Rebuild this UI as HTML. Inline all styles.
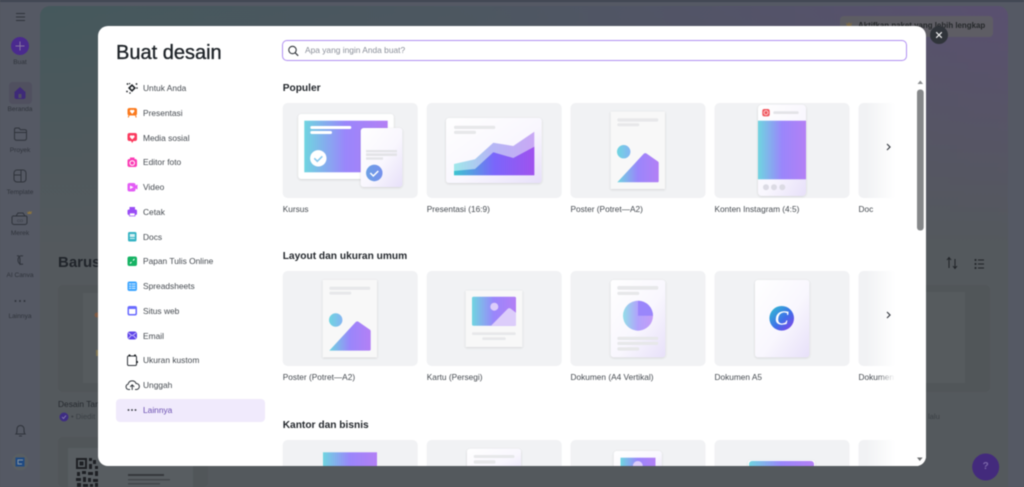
<!DOCTYPE html>
<html><head><meta charset="utf-8"><title>Buat desain</title>
<style>
html,body{margin:0;padding:0;width:1024px;height:487px;overflow:hidden;background:#53585c}
#w{position:absolute;left:0;top:0;width:1024px;height:487px;overflow:hidden;filter:blur(.4px);font-family:"Liberation Sans",sans-serif}
.a{position:absolute}
.t{position:absolute;white-space:nowrap;line-height:12px;height:12px;margin-top:-6px}
.s{font-size:6.6px;color:#2f333b;width:40px;left:0;text-align:center}
.n{font-size:8.4px;color:#454a50;left:143px}
.h{font-size:10.2px;font-weight:bold;color:#24282d;left:282.700px;margin-top:-4.500px}
.l{font-size:8.300px;color:#454a50}
</style></head><body><div id="w">
<div class="a" style="left:0;top:0;width:1024px;height:487px;background:#555964"></div>
<div class="a" style="left:0;top:0;width:1024px;height:2px;background:#3f4552"></div>
<div class="a" style="left:40px;top:6px;width:968px;height:481px;border-radius:10px 10px 0 0;background:linear-gradient(180deg,rgba(84,89,93,0) 0,rgba(84,89,93,.4) 90px,#54595d 240px),linear-gradient(90deg,#45585c 0,#4d5761 45%,#5a5070 100%)"></div>
<div class="a" style="left:9px;top:82px;width:23px;height:22px;border-radius:4px;background:#50505f"></div>

<svg class="a" style="left:0;top:0" width="1024" height="487" viewBox="0 0 1024 487">
<!-- left rail icons -->
<g fill="none" stroke="#2f333b" stroke-width="1">
<path d="M16 13.500h9M16 17h9M16 20.500h9"/>
<path d="M14.500 129.500a1.500 1.500 0 0 1 1.500-1.500h3l1.500 1.800h4.500a1.500 1.500 0 0 1 1.500 1.500v7a2 2 0 0 1-2 2h-8a2 2 0 0 1-2-2z"/><path d="M14.500 132.500h11.500"/>
<rect x="14" y="170" width="12" height="12" rx="3"/><path d="M14 175h7M21 170v12"/>
<path d="M14 216h12a1.500 1.500 0 0 1 1 1.500v5a2 2 0 0 1-2 2h-11a2 2 0 0 1-2-2v-5a1.500 1.500 0 0 1 2-1.500zM16 216l2-3h5l2 3"/>
<path d="M23 256c-3-1-5 1-5 4s2 5 5 4M17 256c2-1 3 1 3 4v5"/>
<path d="M16 434c1-1 1-2 1-5a3.500 3.500 0 0 1 7 0c0 3 0 4 1 5zM19 436h3"/>
<path d="M949 268v-9.500M947 260l2-2.500 2 2.500M955 259v9.500M953 266l2 2.500 2-2.500" stroke="#1f2226"/>
<path d="M978 260h6M978 264h6M978 268h6" stroke="#1f2226"/>
</g>
<circle cx="975.500" cy="260" r="1" fill="#1f2226"/><circle cx="975.500" cy="264" r="1" fill="#1f2226"/><circle cx="975.500" cy="268" r="1" fill="#1f2226"/>
<text x="20" y="222" font-size="4" fill="#2f333b" text-anchor="middle" font-family="Liberation Sans">CO</text>
<path d="M27 211l1 1.500 1.500-1.500 1 1 1.500-1-.7 3h-3.600z" fill="#8a7440"/>
<circle cx="20" cy="46" r="9" fill="#4a2a8e"/><path d="M20 41.500v9M15.500 46h9" stroke="#85749f" stroke-width="1"/>
<path d="M14.500 92l5.500-5 5.500 5v5a2 2 0 0 1-2 2h-7a2 2 0 0 1-2-2z" fill="#3e2a78"/><rect x="18.500" y="94" width="3" height="4" fill="#50505f"/>
<circle cx="15.500" cy="301" r="1" fill="#2f333b"/><circle cx="20" cy="301" r="1" fill="#2f333b"/><circle cx="24.500" cy="301" r="1" fill="#2f333b"/>
<circle cx="20" cy="462" r="8.500" fill="#595e62"/><path d="M15.500 457.500h9v9h-9z" fill="#1f4a82"/><path d="M23 460h-5v4h4" fill="none" stroke="#8894a0" stroke-width="1"/>

<!-- background content -->
<rect x="840" y="16" width="153" height="21" rx="4" fill="#62665f" opacity=".6"/>
<path d="M846 22l1.500 2 1.500-2 1.500 2 1.500-2-.8 5h-4.400z" fill="#7a6a48"/>
<rect x="58" y="285" width="60" height="107" rx="5" fill="#515659"/>
<rect x="83" y="293" width="30" height="90" fill="#565b5e"/>
<circle cx="97" cy="315" r="2.500" fill="#7f5a44"/><rect x="96" y="350" width="4" height="6" fill="#7f7450"/>
<rect x="900" y="285" width="90" height="107" rx="5" fill="#515659"/>
<rect x="900" y="292" width="65" height="91" fill="#565b5e"/>
<rect x="58" y="437" width="150" height="50" rx="5" fill="#515659"/>
<rect x="68" y="448" width="125" height="39" fill="#585d61"/>
<g fill="#1d2024">
<rect x="77" y="459" width="9" height="9" fill="none" stroke="#1d2024" stroke-width="2"/>
<rect x="79.500" y="461.500" width="4" height="4"/>
<rect x="89" y="458" width="3" height="3"/><rect x="93" y="460" width="3" height="4"/><rect x="89" y="464" width="3" height="5"/><rect x="95" y="466" width="3" height="3"/>
<rect x="77" y="472" width="3" height="4"/><rect x="82" y="471" width="4" height="3"/><rect x="88" y="472" width="5" height="3"/><rect x="95" y="471" width="3" height="5"/>
<rect x="76" y="478" width="5" height="3"/><rect x="83" y="477" width="3" height="5"/><rect x="88" y="478" width="3" height="4"/><rect x="93" y="479" width="5" height="3"/>
<rect x="77" y="483" width="4" height="4"/><rect x="83" y="484" width="5" height="3"/><rect x="90" y="484" width="3" height="3"/><rect x="95" y="483" width="3" height="4"/>
</g>
<rect x="128" y="474" width="36" height="2" fill="#36393d"/><rect x="128" y="479" width="42" height="1.500" fill="#44484c"/><rect x="128" y="483" width="32" height="1.500" fill="#44484c"/>
<circle cx="64" cy="417" r="4.500" fill="#3e2d82"/><path d="M62 417l1.500 1.500 2.500-3" stroke="#8b84b0" fill="none" stroke-width=".8"/>
<circle cx="985.700" cy="467" r="13.500" fill="#432a7c"/>
</svg>

<div class="t s" style="top:63px">Buat</div>
<div class="t s" style="top:109.700px">Beranda</div>
<div class="t s" style="top:151px">Proyek</div>
<div class="t s" style="top:192.700px">Template</div>
<div class="t s" style="top:234px">Merek</div>
<div class="t s" style="top:276px">AI Canva</div>
<div class="t s" style="top:317px">Lainnya</div>
<div class="t" style="left:58px;top:263px;font-size:15px;font-weight:bold;color:#20242a;line-height:16px;height:16px;margin-top:-8px">Barusan</div>
<div class="t" style="left:58px;top:404px;font-size:8.400px;color:#25292e">Desain Tanpa Judul</div>
<div class="t" style="left:71px;top:417px;font-size:7.600px;color:#3b4045">• Diedit</div>
<div class="t" style="left:928px;top:417px;font-size:7.600px;color:#3b4045">lalu</div>
<div class="t" style="left:858px;top:26px;font-size:7.900px;font-weight:bold;color:#25282a">Aktifkan paket yang lebih lengkap</div>
<div class="t" style="left:975.700px;width:20px;text-align:center;top:467px;font-size:10px;font-weight:bold;color:#7a66a8">?</div>

<!-- modal -->
<div class="a" style="left:98px;top:26px;width:828px;height:440px;border-radius:10px;background:#fff;overflow:hidden">
<svg class="a" style="left:-98px;top:-26px" width="1024" height="487" viewBox="0 0 1024 487">
<defs>
<linearGradient id="g" x1="0" x2="1" y1="0" y2="0"><stop offset="0" stop-color="#6fd5e0"/><stop offset=".5" stop-color="#9a86fb"/><stop offset="1" stop-color="#b380f5"/></linearGradient>
<linearGradient id="ci" x1="0" x2="1" y1="0" y2="0"><stop offset="0" stop-color="#6fd5e0"/><stop offset="1" stop-color="#85b5f2"/></linearGradient>
<linearGradient id="d" x1="0" x2="1" y1="0" y2="1"><stop offset="0" stop-color="#fff"/><stop offset=".55" stop-color="#f9f7fe"/><stop offset="1" stop-color="#e7e0f9"/></linearGradient>
<linearGradient id="gc" x1="0" x2="1" y1="0" y2="1"><stop offset="0" stop-color="#2fc3cf"/><stop offset=".55" stop-color="#3f6fe8"/><stop offset="1" stop-color="#8a3fe8"/></linearGradient>
<linearGradient id="ab" x1="0" x2="1" y1="0" y2="0"><stop offset="0" stop-color="#9fe8ea"/><stop offset=".45" stop-color="#b5b8f5"/><stop offset="1" stop-color="#c9a8f5"/></linearGradient>
<linearGradient id="af" x1="0" x2="1" y1="0" y2="0"><stop offset="0" stop-color="#3cc5d0"/><stop offset=".5" stop-color="#7a66fb"/><stop offset="1" stop-color="#a052ee"/></linearGradient>
<linearGradient id="f" x1="0" x2="1" y1="0" y2="0"><stop offset="0" stop-color="#fff" stop-opacity="0"/><stop offset="1" stop-color="#fff"/></linearGradient>
<filter id="sh" x="-20%" y="-20%" width="140%" height="140%"><feDropShadow dx="0" dy=".7" stdDeviation="1" flood-color="#000" flood-opacity=".14"/></filter>
<g id="poster">
<rect x="610.700" y="111.700" width="54.300" height="77.300" fill="#f8f8f8" filter="url(#sh)"/>
<rect x="617.300" y="118.300" width="41" height="3.300" rx="1.600" fill="#e7e8ea"/>
<rect x="617.300" y="123.300" width="22" height="3" rx="1.500" fill="#e7e8ea"/>
<circle cx="623.700" cy="151.700" r="6.700" fill="url(#ci)"/>
<path d="M617.300 182.300L643.500 154a2.500 2.500 0 0 1 3.300-.3L658 161.500a2 2 0 0 1 .7 1.500v18a1.300 1.300 0 0 1-1.300 1.300z" fill="url(#g)"/>
</g>
</defs>
<!-- cards -->
<g fill="#f1f2f4">
<rect x="282.700" y="103" width="135" height="95" rx="5"/><rect x="426.700" y="103" width="135" height="95" rx="5"/><rect x="570.500" y="103" width="135" height="95" rx="5"/><rect x="714.500" y="103" width="135" height="95" rx="5"/><rect x="858.500" y="103" width="60" height="95" rx="5"/>
<rect x="282.700" y="271" width="135" height="95" rx="5"/><rect x="426.700" y="271" width="135" height="95" rx="5"/><rect x="570.500" y="271" width="135" height="95" rx="5"/><rect x="714.500" y="271" width="135" height="95" rx="5"/><rect x="858.500" y="271" width="60" height="95" rx="5"/>
<rect x="282.700" y="440" width="135" height="40" rx="5"/><rect x="426.700" y="440" width="135" height="40" rx="5"/><rect x="570.500" y="440" width="135" height="40" rx="5"/><rect x="714.500" y="440" width="135" height="40" rx="5"/><rect x="858.500" y="440" width="60" height="40" rx="5"/>
</g>
<!-- kursus -->
<rect x="298.300" y="114" width="95.400" height="65" rx="3" fill="#fff" filter="url(#sh)"/>
<rect x="304.300" y="120.700" width="83.400" height="51.600" fill="url(#g)"/>
<rect x="310.300" y="126" width="41" height="3" rx="1.500" fill="#fff"/><rect x="310.300" y="131" width="21.700" height="3" rx="1.500" fill="#fff"/>
<circle cx="318.300" cy="158.300" r="8.200" fill="#fff"/><path d="M314.300 158.300l3 3 5-5" fill="none" stroke="#86c8ee" stroke-width="1.500"/>
<rect x="360.700" y="128" width="41.600" height="59" rx="3" fill="url(#d)" filter="url(#sh)"/>
<rect x="366" y="150" width="31" height="2.300" fill="#e4e4e8"/><rect x="366" y="153.300" width="31" height="2.700" fill="#e4e4e8"/><rect x="366" y="157.300" width="17" height="2.400" fill="#e4e4e8"/>
<circle cx="374.300" cy="173" r="8.200" fill="url(#ci)"/><circle cx="374.300" cy="173" r="8.200" fill="#6a72e8" opacity=".55"/><path d="M370.300 173l3 3 5-5" fill="none" stroke="#fff" stroke-width="1.500"/>
<!-- presentasi -->
<rect x="446" y="118" width="95.700" height="65" rx="3" fill="url(#d)" filter="url(#sh)"/>
<rect x="454" y="125.700" width="41.300" height="3.300" rx="1.500" fill="#e7e8ea"/><rect x="454" y="130.700" width="22" height="3.300" rx="1.500" fill="#e7e8ea"/>
<path d="M454 164L475 159.300 493.300 142.700 513.300 146 534.300 131.700V175.300H454z" fill="url(#ab)"/>
<path d="M454 171L475 169 493.300 152.300 513.300 158 534.300 146.700V175.300H454z" fill="url(#af)"/>
<!-- poster row 1 -->
<use href="#poster"/>
<!-- instagram -->
<rect x="758" y="104.700" width="48" height="91.300" rx="4" fill="url(#d)" filter="url(#sh)"/>
<rect x="758" y="120.700" width="48" height="58.600" fill="url(#g)"/>
<rect x="762.300" y="109" width="7.400" height="7.400" rx="2" fill="#f0585f"/><circle cx="766" cy="112.700" r="2" fill="none" stroke="#fff" stroke-width=".7"/>
<rect x="773.300" y="111.300" width="25.400" height="2.700" rx="1.300" fill="#e4e4e8"/>
<circle cx="766" cy="187.300" r="3" fill="#dcdbe4"/><circle cx="774" cy="187.300" r="3" fill="#dcdbe4"/><circle cx="782.300" cy="187.300" r="3" fill="#dcdbe4"/>
<!-- row 2 -->
<use href="#poster" transform="translate(-288 168.300)"/>
<rect x="465.700" y="290.700" width="56.600" height="56.300" fill="#f8f8f8" filter="url(#sh)"/>
<rect x="472" y="296.700" width="44" height="29" rx="1.500" fill="url(#g)"/>
<circle cx="494.300" cy="306.700" r="4" fill="#dccdfa"/>
<path d="M491 325.700L507.500 309a2.500 2.500 0 0 1 3.300-.2L516 312.700V325.700z" fill="#dccdfa"/>
<rect x="472" y="332.300" width="43.700" height="2.700" rx="1.300" fill="#e7e8ea"/><rect x="482.300" y="337.300" width="23.400" height="2.700" rx="1.300" fill="#e7e8ea"/>
<rect x="610.700" y="280" width="54.600" height="77.300" rx="3" fill="url(#d)" filter="url(#sh)"/>
<rect x="617.300" y="286" width="41" height="3.700" rx="1.600" fill="#e7e8ea"/><rect x="617.300" y="291.700" width="22" height="3.300" rx="1.600" fill="#e7e8ea"/>
<circle cx="638" cy="315.700" r="15" fill="url(#g)" opacity=".75"/>
<path d="M638 315.700V300.700A15 15 0 0 1 653 315.700z" fill="#9a86fb"/>
<rect x="617.300" y="336.700" width="41" height="3.300" rx="1.600" fill="#e7e8ea"/><rect x="617.300" y="341.700" width="41" height="3.300" rx="1.600" fill="#e7e8ea"/><rect x="617.300" y="347.300" width="22" height="3.300" rx="1.600" fill="#e7e8ea"/>
<rect x="755" y="280" width="54.300" height="77.300" rx="3" fill="url(#d)" filter="url(#sh)"/>
<circle cx="781.700" cy="318.300" r="12.300" fill="url(#gc)"/>
<text x="781.500" y="324.500" font-size="20" font-style="italic" fill="#fff" stroke="#fff" stroke-width=".4" text-anchor="middle" font-family="Liberation Serif">C</text>
<!-- row 3 -->
<rect x="323" y="452.300" width="54" height="25" fill="url(#g)"/>
<rect x="467" y="448.700" width="54" height="30" rx="3" fill="url(#d)" filter="url(#sh)"/>
<rect x="473.700" y="455" width="40.800" height="3" rx="1.500" fill="#e7e8ea"/><rect x="473.700" y="460.300" width="21.800" height="3.400" rx="1.500" fill="#e7e8ea"/>
<rect x="613.800" y="451" width="48" height="28" rx="3" fill="url(#d)" filter="url(#sh)"/>
<rect x="620.500" y="457.700" width="35" height="20" fill="url(#g)"/><circle cx="637.800" cy="466" r="5" fill="#dccdfa"/>
<rect x="748" y="460.300" width="67" height="18" rx="3" fill="#fff" filter="url(#sh)"/><rect x="749" y="461" width="65" height="17" rx="3" fill="url(#g)"/>
<!-- fade on the right -->
<rect x="866" y="95" width="29" height="371" fill="url(#f)"/>
<rect x="895" y="66" width="31" height="400" fill="#fff"/>
<path d="M887 144l3 3-3 3" fill="none" stroke="#3a3e44" stroke-width="1.200"/>
<path d="M887 312l3 3-3 3" fill="none" stroke="#3a3e44" stroke-width="1.200"/>
<!-- search icon -->
<circle cx="292.500" cy="50" r="3.700" fill="none" stroke="#33373d" stroke-width="1.100"/><path d="M295.200 52.800l3 3" stroke="#33373d" stroke-width="1.200"/>
<!-- scroll -->
<rect x="917" y="89.500" width="6.700" height="141" rx="3" fill="#858789"/>
<path d="M917.500 84l2.800-3.500 2.800 3.500z" fill="#8a8c8e"/><path d="M917 457.500l2.800 3.500 2.800-3.500z" fill="#6e7072"/>
<!-- sidebar icons -->
<g fill="#1e2226">
<path d="M132 84l4 4-4 4-4-4zM132 86.300l1.700 1.700-1.700 1.700-1.700-1.700z" fill-rule="evenodd"/>
<circle cx="127.500" cy="84" r=".9"/><circle cx="136.500" cy="84" r=".9"/><circle cx="127" cy="91.500" r=".9"/><circle cx="137" cy="88" r=".8"/><circle cx="130" cy="93" r=".8"/><path d="M129 83h1.200v1.200h-1.200z"/>
</g>
<rect x="127.500" y="108" width="9.500" height="7.500" rx="2" fill="#fb7a1e"/><path d="M129 115l-.7 2.500M135.500 115l.7 2.500" stroke="#fb7a1e" stroke-width="1"/><path d="M132.200 114l-2-2.200a1.200 1.200 0 0 1 2-1.500 1.200 1.200 0 0 1 2 1.500z" fill="#fff"/>
<rect x="127.500" y="133" width="9.500" height="8" rx="2" fill="#fb3a5e"/><path d="M131 141l1.200 2 1.200-2z" fill="#fb3a5e"/><path d="M132.200 139.500l-2.200-2.200a1.200 1.200 0 0 1 2.200-1.300 1.200 1.200 0 0 1 2.200 1.300z" fill="#fff"/>
<rect x="127.500" y="159" width="9.500" height="8" rx="2" fill="#fb3db5"/><rect x="130" y="157.500" width="4.500" height="2" fill="#fb3db5"/><circle cx="132.200" cy="163" r="2.300" fill="none" stroke="#fff" stroke-width="1"/>
<rect x="127.500" y="183" width="8" height="8.500" rx="2" fill="#e35cf5"/><path d="M135.500 185.500l2-1v5l-2-1z" fill="#e35cf5"/><path d="M130 185.500l3.500 1.800-3.500 1.800z" fill="#fff"/>
<rect x="127.500" y="209.500" width="9.500" height="5.500" rx="1.500" fill="#9a4df5"/><rect x="129.500" y="207" width="5.500" height="2.800" fill="#9a4df5"/><rect x="129.500" y="213" width="5.500" height="3" fill="#fff" stroke="#9a4df5" stroke-width=".7"/>
<rect x="128" y="232" width="8.500" height="9.500" rx="1.500" fill="#35b3c3"/><rect x="129.800" y="234" width="5" height="3" fill="#d6f1f4"/><rect x="129.800" y="238" width="5" height="1" fill="#d6f1f4"/>
<rect x="127.500" y="256.500" width="9.500" height="9.500" rx="2" fill="#16b364"/><path d="M130 263.500l1.500-1.500M134.500 259l-1.500 1.500" stroke="#fff" stroke-width="1"/>
<rect x="127.500" y="281.500" width="9.500" height="9.500" rx="2" fill="#3da5ff"/><path d="M129 284h6.500M129 286.200h6.500M129 288.400h6.500" stroke="#d9eeff" stroke-width="1"/><path d="M131.500 283v7" stroke="#3da5ff" stroke-width=".6"/>
<rect x="127.500" y="306" width="9.500" height="9.500" rx="2" fill="#6a6cff"/><rect x="129" y="308" width="6.500" height="6" rx=".7" fill="#fff"/><rect x="129" y="307.500" width="6.500" height="1.500" fill="#6a6cff"/>
<rect x="127.500" y="331.500" width="9.500" height="8" rx="2.500" fill="#5f45e8"/><path d="M128.500 333l3.700 2.800 3.700-2.800M128.500 338.300l2.500-2.500M136 338.300l-2.500-2.500" fill="none" stroke="#d9d2ff" stroke-width=".8"/>
<rect x="127.500" y="356" width="9" height="9.500" rx="1.200" fill="none" stroke="#30343a" stroke-width="1"/><circle cx="129.500" cy="355.500" r="1.100" fill="#1e2226"/><circle cx="135" cy="355.500" r="1.100" fill="#1e2226"/><circle cx="137" cy="362" r="1.100" fill="#1e2226"/>
<path d="M130 389.500h-1.500a2.700 2.700 0 0 1-.4-5.300 4.200 4.200 0 0 1 8-.7 3 3 0 0 1 .5 6h-1.600" fill="none" stroke="#30343a" stroke-width="1"/><path d="M132.200 390v-5M130.200 386.800l2-2 2 2" fill="none" stroke="#30343a" stroke-width="1"/>
<circle cx="128.500" cy="410" r=".9" fill="#2a2e33"/><circle cx="132" cy="410" r=".9" fill="#2a2e33"/><circle cx="135.500" cy="410" r=".9" fill="#2a2e33"/>
</svg>
<div class="a" style="left:18px;top:373px;width:149px;height:23px;border-radius:4px;background:#f0eafc;z-index:0"></div>
<div class="a" style="left:184px;top:14px;width:623px;height:19px;border:1.700px solid #b08ff2;border-radius:5px"></div>
</div>

<!-- modal text -->
<svg class="a" style="left:124px;top:404px" width="16" height="12" viewBox="0 0 16 12"><circle cx="4.500" cy="6" r=".9" fill="#2a2e33"/><circle cx="8" cy="6" r=".9" fill="#2a2e33"/><circle cx="11.500" cy="6" r=".9" fill="#2a2e33"/></svg>
<div class="t" style="left:116px;top:53px;font-size:20px;line-height:24px;height:24px;margin-top:-12px;color:#1e2328;-webkit-text-stroke:.35px #1e2328">Buat desain</div>
<div class="t" style="left:305px;top:50px;font-size:8.400px;color:#8a8f99">Apa yang ingin Anda buat?</div>
<div class="t n" style="top:88px">Untuk Anda</div>
<div class="t n" style="top:112.700px">Presentasi</div>
<div class="t n" style="top:137.500px">Media sosial</div>
<div class="t n" style="top:162.300px">Editor foto</div>
<div class="t n" style="top:187px">Video</div>
<div class="t n" style="top:211.800px">Cetak</div>
<div class="t n" style="top:236.500px">Docs</div>
<div class="t n" style="top:261px">Papan Tulis Online</div>
<div class="t n" style="top:286px">Spreadsheets</div>
<div class="t n" style="top:310.800px">Situs web</div>
<div class="t n" style="top:335.500px">Email</div>
<div class="t n" style="top:360.300px">Ukuran kustom</div>
<div class="t n" style="top:385px">Unggah</div>
<div class="t n" style="top:410px;color:#6a4fb0">Lainnya</div>
<div class="t h" style="top:87px">Populer</div>
<div class="t h" style="top:255px">Layout dan ukuran umum</div>
<div class="t h" style="top:424px">Kantor dan bisnis</div>
<div class="t l" style="left:282.700px;top:209px">Kursus</div>
<div class="t l" style="left:426.700px;top:209px">Presentasi (16:9)</div>
<div class="t l" style="left:570.500px;top:209px">Poster (Potret—A2)</div>
<div class="t l" style="left:714.500px;top:209px">Konten Instagram (4:5)</div>
<div class="t l" style="left:858.500px;top:209px">Doc</div>
<div class="t l" style="left:282.700px;top:377px">Poster (Potret—A2)</div>
<div class="t l" style="left:426.700px;top:377px">Kartu (Persegi)</div>
<div class="t l" style="left:570.500px;top:377px">Dokumen (A4 Vertikal)</div>
<div class="t l" style="left:714.500px;top:377px">Dokumen A5</div>
<div class="t l" style="left:858.500px;top:377px;width:36px;overflow:hidden;-webkit-mask-image:linear-gradient(90deg,#000 50%,transparent)">Dokumen</div>

<!-- close -->
<svg class="a" style="left:930px;top:26px" width="18" height="18" viewBox="0 0 18 18"><circle cx="9" cy="9" r="9" fill="#30343a"/><path d="M6.200 6.200l5.600 5.600M11.800 6.200l-5.600 5.600" stroke="#f2f2f2" stroke-width="1.100"/></svg>
</div></body></html>
